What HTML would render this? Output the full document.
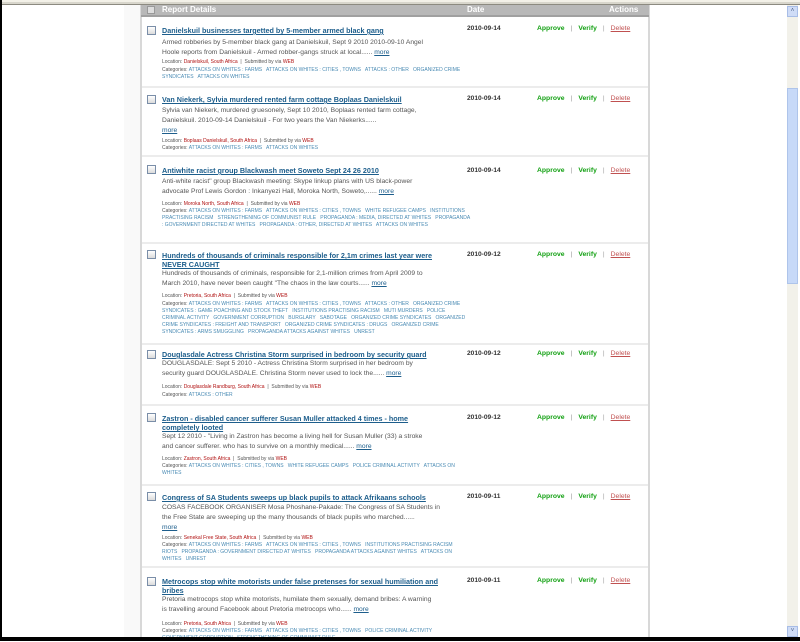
<!DOCTYPE html>
<html><head><meta charset="utf-8"><style>
*{margin:0;padding:0;box-sizing:border-box}
body{width:800px;height:641px;overflow:hidden;background:#fff;font-family:"Liberation Sans",sans-serif;position:relative}
.frameL{position:absolute;left:0;top:0;width:2px;height:641px;background:#000}
.frameT{position:absolute;left:0;top:0;width:800px;height:5px;background:#d8d6cc;border-top:2px solid #f3f1e8;border-bottom:1px solid #8c8a80}
.frameB{position:absolute;left:0;top:637px;width:800px;height:4px;background:#000}
.side{position:absolute;left:124px;top:5px;width:16px;height:632px;background:#f9f9f9}
.tbl{position:absolute;left:140px;top:5px;width:510px;height:632px;border-left:2px solid #d8d8d8;border-right:2px solid #d8d8d8;background:#fff}
.hdr{position:absolute;left:141px;top:5px;width:508px;height:12px;background:#b8b8b8;border-bottom:2px solid #a0a0a0}
.hdr span{position:absolute;top:0;color:#fff;font-weight:bold;font-size:8px;line-height:10px}
.sep{position:absolute;left:142px;width:506px;height:2px;background:#ececec}
.cb{position:absolute;left:147px;width:9px;height:9px;border:1px solid #7a8ea8;background:linear-gradient(#fff,#dcdcdc)}
.t{position:absolute;left:162px;font-weight:bold;font-size:7.2px;line-height:9px;color:#1d5e8c;text-decoration:underline;width:290px}
.d{position:absolute;left:162px;font-size:6.7px;line-height:10px;color:#555;width:272px}
.d a{color:#1d5e8c;text-decoration:underline}
.l{position:absolute;left:162px;font-size:5px;line-height:7px;color:#555;white-space:nowrap}
.l b{color:#b01010;font-weight:normal}
.c{position:absolute;left:162px;font-size:5px;line-height:7px;color:#555;width:308px}
.c i{font-style:normal;color:#4a8bb4}
.dt{position:absolute;left:467px;font-weight:bold;font-size:6.6px;color:#333;line-height:9px}
.ac{position:absolute;left:537px;font-size:6.8px;line-height:9px;white-space:nowrap}
.ac .g{color:#12a012;font-weight:bold}
.ac .s{color:#999;margin:0 6px}
.ac .r{color:#c05050;text-decoration:underline}
.sb{position:absolute;left:787px;top:5px;width:11px;height:632px;background:#f2f1ea}
.th{position:absolute;left:787px;top:88px;width:11px;height:196px;background:#c7d9f8;border:1px solid #aec4ea}
.btn{position:absolute;left:787px;width:11px;height:11px;background:#cfdcf7;border:1px solid #a8bde6;font-size:6px;color:#4d6185;text-align:center;line-height:9px}
</style></head><body>
<div class="side"></div>
<div class="tbl"></div>
<div class="hdr"><span style="left:6px;width:8px;height:8px;top:1px;background:#ddd;border:1px solid #999"></span><span style="left:21px">Report Details</span><span style="left:326px">Date</span><span style="left:468px">Actions</span></div>

<div class="sep" style="top:86px"></div><div class="sep" style="top:155px"></div><div class="sep" style="top:242px"></div><div class="sep" style="top:343px"></div><div class="sep" style="top:404px"></div><div class="sep" style="top:484px"></div><div class="sep" style="top:566px"></div>

<div class="cb" style="top:26px"></div>
<div class="t" style="top:26px">Danielskuil businesses targetted by 5-member armed black gang</div>
<div class="d" style="top:38px">Armed robberies by 5-member black gang at Danielskuil, Sept 9 2010 2010-09-10 Angel Hoole reports from Danielskuil - Armed robber-gangs struck at local...... <a>more</a></div>
<div class="l" style="top:59px">Location: <b>Danielskuil, South Africa</b> &nbsp;| &nbsp;Submitted by via <b>WEB</b></div>
<div class="c" style="top:67px">Categories: <i>ATTACKS ON WHITES : FARMS &nbsp; ATTACKS ON WHITES : CITIES , TOWNS &nbsp; ATTACKS : OTHER &nbsp; ORGANIZED CRIME SYNDICATES &nbsp; ATTACKS ON WHITES</i></div>
<div class="dt" style="top:24px">2010-09-14</div>
<div class="ac" style="top:24px"><span class="g">Approve</span><span class="s">|</span><span class="g">Verify</span><span class="s">|</span><span class="r">Delete</span></div>

<div class="cb" style="top:95px"></div>
<div class="t" style="top:95px">Van Niekerk, Sylvia murdered rented farm cottage Boplaas Danielskuil</div>
<div class="d" style="top:106px;width:262px">Sylvia van Niekerk, murdered gruesonely, Sept 10 2010, Boplaas rented farm cottage, Danielskuil. 2010-09-14 Danielskuil - For two years the Van Niekerks......<br><a>more</a></div>
<div class="l" style="top:138px">Location: <b>Boplaas Danielskuil, South Africa</b> &nbsp;| &nbsp;Submitted by via <b>WEB</b></div>
<div class="c" style="top:145px">Categories: <i>ATTACKS ON WHITES : FARMS &nbsp; ATTACKS ON WHITES</i></div>
<div class="dt" style="top:94px">2010-09-14</div>
<div class="ac" style="top:94px"><span class="g">Approve</span><span class="s">|</span><span class="g">Verify</span><span class="s">|</span><span class="r">Delete</span></div>

<div class="cb" style="top:165px"></div>
<div class="t" style="top:166px">Antiwhite racist group Blackwash meet Soweto Sept 24 26 2010</div>
<div class="d" style="top:177px">Anti-white racist" group Blackwash meeting: Skype linkup plans with US black-power advocate Prof Lewis Gordon : Inkanyezi Hall, Moroka North, Soweto,...... <a>more</a></div>
<div class="l" style="top:201px">Location: <b>Moroka North, South Africa</b> &nbsp;| &nbsp;Submitted by via <b>WEB</b></div>
<div class="c" style="top:208px">Categories: <i>ATTACKS ON WHITES : FARMS &nbsp; ATTACKS ON WHITES : CITIES , TOWNS &nbsp; WHITE REFUGEE CAMPS &nbsp; INSTITUTIONS PRACTISING RACISM &nbsp; STRENGTHENING OF COMMUNIST RULE &nbsp; PROPAGANDA : MEDIA, DIRECTED AT WHITES &nbsp; PROPAGANDA : GOVERNMENT DIRECTED AT WHITES &nbsp; PROPAGANDA : OTHER, DIRECTED AT WHITES &nbsp; ATTACKS ON WHITES</i></div>
<div class="dt" style="top:166px">2010-09-14</div>
<div class="ac" style="top:166px"><span class="g">Approve</span><span class="s">|</span><span class="g">Verify</span><span class="s">|</span><span class="r">Delete</span></div>

<div class="cb" style="top:250px"></div>
<div class="t" style="top:251px">Hundreds of thousands of criminals responsible for 2,1m crimes last year were<br>NEVER CAUGHT</div>
<div class="d" style="top:269px">Hundreds of thousands of criminals, responsible for 2,1-million crimes from April 2009 to March 2010, have never been caught "The chaos in the law courts...... <a>more</a></div>
<div class="l" style="top:293px">Location: <b>Pretoria, South Africa</b> &nbsp;| &nbsp;Submitted by via <b>WEB</b></div>
<div class="c" style="top:301px">Categories: <i>ATTACKS ON WHITES : FARMS &nbsp; ATTACKS ON WHITES : CITIES , TOWNS &nbsp; ATTACKS : OTHER &nbsp; ORGANIZED CRIME SYNDICATES : GAME POACHING AND STOCK THEFT &nbsp; INSTITUTIONS PRACTISING RACISM &nbsp; MUTI MURDERS &nbsp; POLICE CRIMINAL ACTIVITY &nbsp; GOVERNMENT CORRUPTION &nbsp; BURGLARY &nbsp; SABOTAGE &nbsp; ORGANIZED CRIME SYNDICATES &nbsp; ORGANIZED CRIME SYNDICATES : FREIGHT AND TRANSPORT &nbsp; ORGANIZED CRIME SYNDICATES : DRUGS &nbsp; ORGANIZED CRIME SYNDICATES : ARMS SMUGGLING &nbsp; PROPAGANDA ATTACKS AGAINST WHITES &nbsp; UNREST</i></div>
<div class="dt" style="top:250px">2010-09-12</div>
<div class="ac" style="top:250px"><span class="g">Approve</span><span class="s">|</span><span class="g">Verify</span><span class="s">|</span><span class="r">Delete</span></div>

<div class="cb" style="top:350px"></div>
<div class="t" style="top:350px;width:300px">Douglasdale Actress Christina Storm surprised in bedroom by security guard</div>
<div class="d" style="top:359px">DOUGLASDALE: Sept 5 2010 - Actress Christina Storm surprised in her bedroom by security guard DOUGLASDALE. Christina Storm never used to lock the...... <a>more</a></div>
<div class="l" style="top:384px">Location: <b>Douglasdale Randburg, South Africa</b> &nbsp;| &nbsp;Submitted by via <b>WEB</b></div>
<div class="c" style="top:392px">Categories: <i>ATTACKS : OTHER</i></div>
<div class="dt" style="top:349px">2010-09-12</div>
<div class="ac" style="top:349px"><span class="g">Approve</span><span class="s">|</span><span class="g">Verify</span><span class="s">|</span><span class="r">Delete</span></div>

<div class="cb" style="top:413px"></div>
<div class="t" style="top:414px">Zastron - disabled cancer sufferer Susan Muller attacked 4 times - home<br>completely looted</div>
<div class="d" style="top:432px">Sept 12 2010 - "Living in Zastron has become a living hell for Susan Muller (33) a stroke and cancer sufferer. who has to survive on a monthly medical...... <a>more</a></div>
<div class="l" style="top:456px">Location: <b>Zastron, South Africa</b> &nbsp;| &nbsp;Submitted by via <b>WEB</b></div>
<div class="c" style="top:463px">Categories: <i>ATTACKS ON WHITES : CITIES , TOWNS &nbsp; WHITE REFUGEE CAMPS &nbsp; POLICE CRIMINAL ACTIVITY &nbsp; ATTACKS ON WHITES</i></div>
<div class="dt" style="top:413px">2010-09-12</div>
<div class="ac" style="top:413px"><span class="g">Approve</span><span class="s">|</span><span class="g">Verify</span><span class="s">|</span><span class="r">Delete</span></div>

<div class="cb" style="top:492px"></div>
<div class="t" style="top:493px;width:300px">Congress of SA Students sweeps up black pupils to attack Afrikaans schools</div>
<div class="d" style="top:503px;width:280px">COSAS FACEBOOK ORGANISER Mosa Phoshane-Pakade: The Congress of SA Students in<br>the Free State are sweeping up the many thousands of black pupils who marched......<br><a>more</a></div>
<div class="l" style="top:535px">Location: <b>Senekal Free State, South Africa</b> &nbsp;| &nbsp;Submitted by via <b>WEB</b></div>
<div class="c" style="top:542px">Categories: <i>ATTACKS ON WHITES : FARMS &nbsp; ATTACKS ON WHITES : CITIES , TOWNS &nbsp; INSTITUTIONS PRACTISING RACISM &nbsp; RIOTS &nbsp; PROPAGANDA : GOVERNMENT DIRECTED AT WHITES &nbsp; PROPAGANDA ATTACKS AGAINST WHITES &nbsp; ATTACKS ON WHITES &nbsp; UNREST</i></div>
<div class="dt" style="top:492px">2010-09-11</div>
<div class="ac" style="top:492px"><span class="g">Approve</span><span class="s">|</span><span class="g">Verify</span><span class="s">|</span><span class="r">Delete</span></div>

<div class="cb" style="top:577px"></div>
<div class="t" style="top:577px">Metrocops stop white motorists under false pretenses for sexual humiliation and<br>bribes</div>
<div class="d" style="top:595px">Pretoria metrocops stop white motorists, humilate them sexually, demand bribes: A warning is travelling around Facebook about Pretoria metrocops who...... <a>more</a></div>
<div class="l" style="top:621px">Location: <b>Pretoria, South Africa</b> &nbsp;| &nbsp;Submitted by via <b>WEB</b></div>
<div class="c" style="top:628px">Categories: <i>ATTACKS ON WHITES : FARMS &nbsp; ATTACKS ON WHITES : CITIES , TOWNS &nbsp; POLICE CRIMINAL ACTIVITY &nbsp; GOVERNMENT CORRUPTION &nbsp; STRENGTHENING OF COMMUNIST RULE</i></div>
<div class="dt" style="top:576px">2010-09-11</div>
<div class="ac" style="top:576px"><span class="g">Approve</span><span class="s">|</span><span class="g">Verify</span><span class="s">|</span><span class="r">Delete</span></div>

<div class="sb"></div>
<div class="th"></div>
<div class="btn" style="top:6px">&#708;</div>
<div class="btn" style="top:626px">&#709;</div>
<div class="frameT"></div>
<div class="frameL"></div>
<div class="frameB"></div>
</body></html>
